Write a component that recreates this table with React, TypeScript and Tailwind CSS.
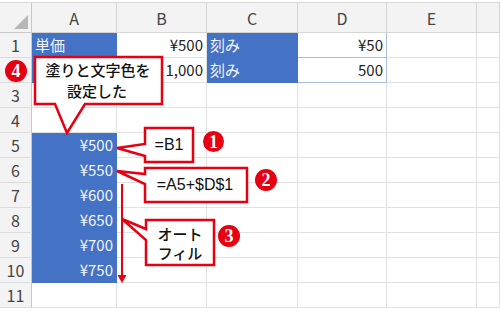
const cols = ["A", "B", "C", "D", "E", ""];

type Cell = { text?: string; blue?: boolean; align?: "left" | "right"; edge?: boolean };

const rows: Cell[][] = [
  [
    { text: "単価", blue: true, align: "left" },
    { text: "¥500", align: "right" },
    { text: "刻み", blue: true, align: "left" },
    { text: "¥50", align: "right", edge: true },
    {},
    {},
  ],
  [
    { text: "", blue: true },
    { text: "1,000", align: "right" },
    { text: "刻み", blue: true, align: "left" },
    { text: "500", align: "right", edge: true },
    {},
    {},
  ],
  [{}, {}, {}, {}, {}, {}],
  [{}, {}, {}, {}, {}, {}],
  ...["¥500", "¥550", "¥600", "¥650", "¥700", "¥750"].map((v) => [
    { text: v, blue: true, align: "right" as const },
    {},
    {},
    {},
    {},
    {},
  ]),
  [{}, {}, {}, {}, {}, {}],
];

function Badge({ n, className }: { n: string; className: string }) {
  return (
    <div
      className={`absolute flex items-center justify-center rounded-full bg-[#e60012] text-white font-bold text-[18px] leading-none ${className}`}
      style={{ fontFamily: '"Liberation Serif", "DejaVu Serif", serif' }}
    >
      {n}
    </div>
  );
}

export default function App() {
  return (
    <div
      className="relative w-[500px] h-[315px] overflow-hidden bg-white text-[#222]"
      style={{ fontFamily: '"Noto Sans CJK JP", "Noto Sans", sans-serif' }}
    >
      <div className="mt-[2px] border-t border-[#d6d6d6] grid grid-cols-[32px_85px_90px_91px_89px_90px_23px] grid-rows-[30px_repeat(11,25px)] text-[15px]">
        {/* header row */}
        <div className="relative bg-[#f3f3f3] border-r border-b border-[#c8c8c8]">
          <div className="absolute right-[3px] bottom-[3px] w-0 h-0 border-l-[14px] border-l-transparent border-b-[14px] border-b-[#b7b7b7]" />
        </div>
        {cols.map((c, i) => (
          <div
            key={i}
            className="flex items-center justify-center bg-[#f3f3f3] border-r border-b border-[#d4d4d4] text-[#444] text-[16px]"
          >
            {c}
          </div>
        ))}

        {rows.map((r, ri) => (
          <>
            <div
              key={`h${ri}`}
              className="flex items-center justify-center bg-[#f3f3f3] border-r border-b border-r-[#c8c8c8] border-b-[#dcdcdc] text-[#444] text-[16px]"
            >
              {ri + 1}
            </div>
            {r.map((cell, ci) => (
              <div
                key={`${ri}-${ci}`}
                className={`flex items-center px-[3px] border-r border-b ${
                  cell.blue
                    ? "bg-[#4472c4] border-[#4472c4] text-[#f4f6fb]"
                    : cell.edge
                      ? "border-[#a9bde3]"
                      : "border-[#e1e1e1]"
                } ${cell.align === "right" ? "justify-end" : "justify-start"}`}
              >
                {cell.text}
              </div>
            ))}
          </>
        ))}
      </div>

      {/* callouts */}
      <svg className="absolute inset-0" width="500" height="315" viewBox="0 0 500 315">
        <g fill="white" stroke="#e60012" strokeWidth="2.5" strokeLinejoin="miter">
          <path d="M35,57 H162 V104 H85 L67,133 L55,104 H35 Z" />
          <path d="M145,128 H193 V162 H145 V156 L117,148 L145,144 Z" />
          <path d="M145,168 H247 V202 H145 V184 L117,171 L145,174 Z" />
          <path d="M146,220 H214 V265 H146 V240 L122,219 L146,229 Z" />
        </g>
        <line x1="122" y1="184" x2="122" y2="276" stroke="#e60012" strokeWidth="2" />
        <path d="M117.5,275 L126.5,275 L122,283 Z" fill="#e60012" />
        <g
          fill="#111"
          fontSize="15"
          textAnchor="middle"
          style={{ fontFamily: '"Noto Sans CJK JP", "Noto Sans", sans-serif' }}
        >
          <text x="98" y="76" fontWeight="500">塗りと文字色を</text>
          <text x="97" y="97" fontWeight="500">設定した</text>
          <text x="169" y="150" fontSize="16" style={{ fontFamily: '"Liberation Sans", sans-serif' }}>=B1</text>
          <text x="195" y="190" fontSize="16" style={{ fontFamily: '"Liberation Sans", sans-serif' }}>=A5+$D$1</text>
          <text x="180" y="240" fontWeight="500">オート</text>
          <text x="180" y="259" fontWeight="500">フィル</text>
        </g>
      </svg>

      <Badge n="4" className="left-[5px] top-[60px] w-[22px] h-[22px]" />
      <Badge n="1" className="left-[203px] top-[131px] w-[21px] h-[21px]" />
      <Badge n="2" className="left-[255px] top-[169px] w-[22px] h-[22px]" />
      <Badge n="3" className="left-[218px] top-[225px] w-[22px] h-[22px]" />
    </div>
  );
}
